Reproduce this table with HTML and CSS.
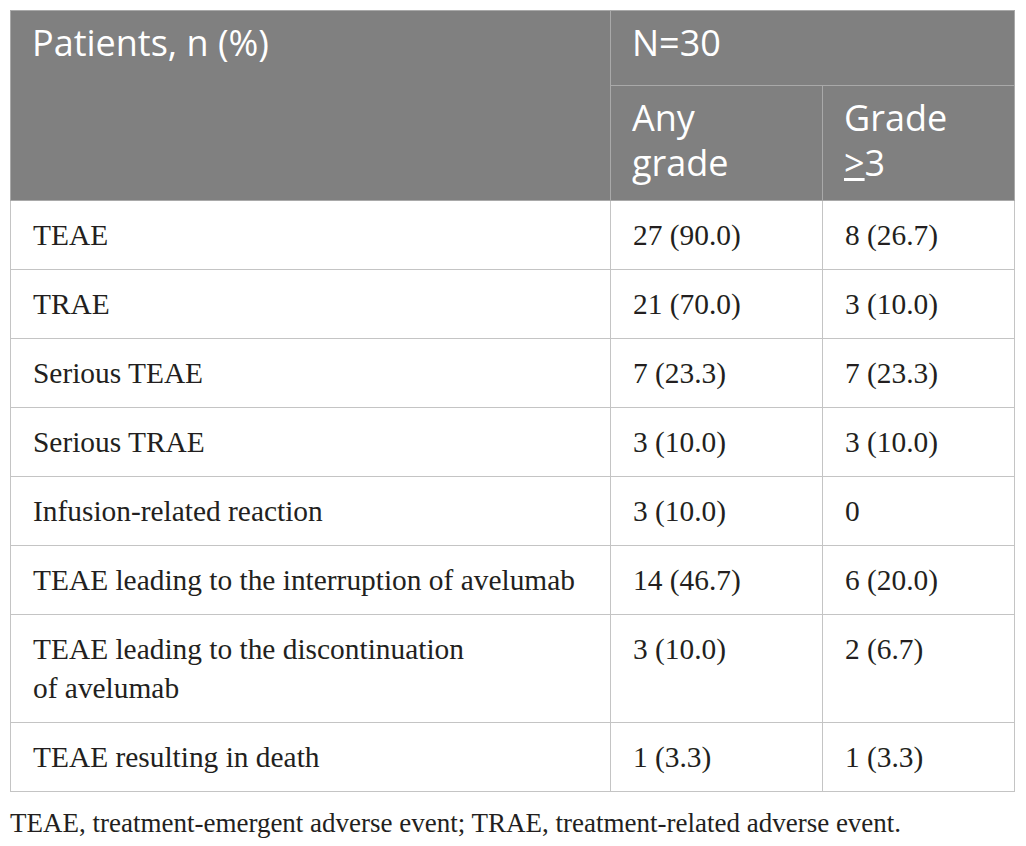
FILE: index.html
```html
<!DOCTYPE html>
<html>
<head>
    <meta charset="UTF-8">
    <title>Adverse events</title>
    <link rel="stylesheet" href="styles.css">
</head>
<body>
<div class="wrap">
    <table class="ae-table">
        <colgroup>
            <col class="c-label">
            <col class="c-any">
            <col class="c-g3">
        </colgroup>
        <thead>
            <tr class="h1">
                <th rowspan="2">Patients, n (%)</th>
                <th colspan="2">N=30</th>
            </tr>
            <tr class="h2">
                <th><span class="ln">Any</span><span class="ln">grade</span></th>
                <th><span class="ln">Grade</span><span class="ln"><span class="ge">&gt;</span>3</span></th>
            </tr>
        </thead>
        <tbody>
            <tr><td>TEAE</td><td>27 (90.0)</td><td>8 (26.7)</td></tr>
            <tr><td>TRAE</td><td>21 (70.0)</td><td>3 (10.0)</td></tr>
            <tr><td>Serious TEAE</td><td>7 (23.3)</td><td>7 (23.3)</td></tr>
            <tr><td>Serious TRAE</td><td>3 (10.0)</td><td>3 (10.0)</td></tr>
            <tr><td>Infusion-related reaction</td><td>3 (10.0)</td><td>0</td></tr>
            <tr><td>TEAE leading to the interruption of avelumab</td><td>14 (46.7)</td><td>6 (20.0)</td></tr>
            <tr><td>TEAE leading to the discontinuation<br>of avelumab</td><td>3 (10.0)</td><td>2 (6.7)</td></tr>
            <tr><td>TEAE resulting in death</td><td>1 (3.3)</td><td>1 (3.3)</td></tr>
        </tbody>
    </table>
    <p class="note">TEAE, treatment-emergent adverse event; TRAE, treatment-related adverse event.</p>
</div>
</body>
</html>
```

FILE: styles.css
```css
body{margin:0;padding:0;background:#fff;}
.wrap{padding:10px 12px 0 10px;}
.ae-table{width:1004px;border-collapse:collapse;table-layout:fixed;border:1px solid #c4c4c4;}
.c-label{width:600px;}
.c-any{width:212px;}
.c-g3{width:192px;}
.ae-table th{background:#808080;color:#fff;font:400 36px/44px "Open Sans",Arial,sans-serif;text-align:left;vertical-align:top;padding:10px 20px 0 21px;border:1px solid #a9a9a9;}
.ae-table th .ln{display:block;height:44px;line-height:38px;}
.ae-table th .ln + .ln{margin-top:1px;}
.ae-table tr.h1{height:75px;}
.ae-table tr.h2{height:115px;}
.ae-table tr.h2 th{padding-top:13px;}
.ae-table th .ge{text-decoration:underline;text-underline-offset:2px;}
.ae-table td{font:29.4px/39px "Liberation Serif","Times New Roman",serif;color:#231f20;padding:15px 20px 14px 22px;vertical-align:top;border:1px solid #c4c4c4;}
.ae-table td:first-child{padding-right:22px;}
.note{margin:13px 0 0 0;font:27px/36px "Liberation Serif","Times New Roman",serif;color:#231f20;}
```
